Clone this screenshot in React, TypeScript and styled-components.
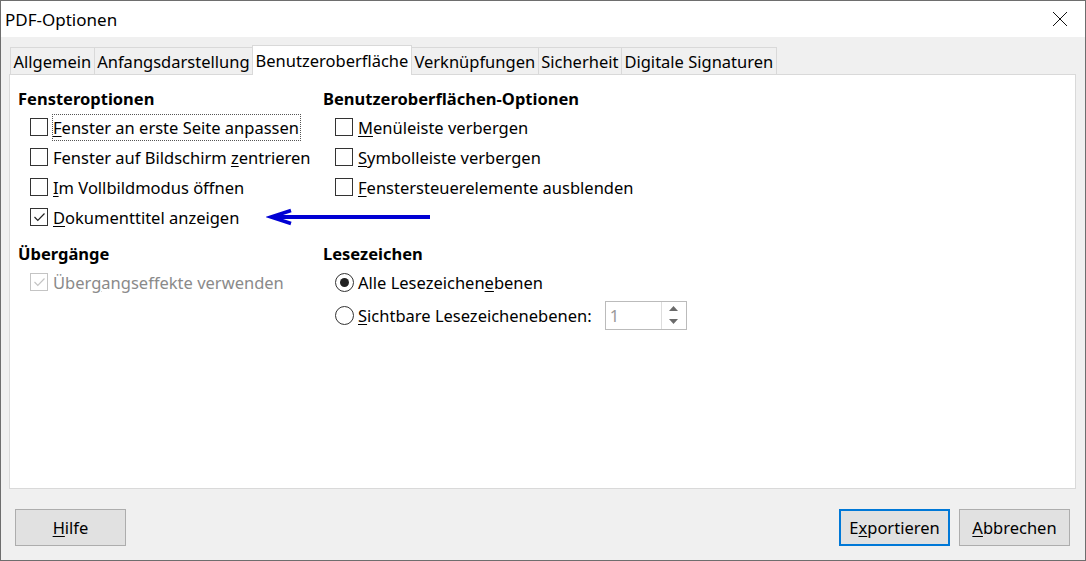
import styled, { createGlobalStyle } from 'styled-components'

const Global = createGlobalStyle`
  html, body { margin: 0; padding: 0; background: #fff; }
  body { font-family: "Noto Sans", "Open Sans", sans-serif; font-size: 16.5px; color: #000; }
`

const Window = styled.div`
  width: 1086px;
  height: 561px;
  box-sizing: border-box;
  border: 1px solid #6e6e6e;
  display: flex;
  flex-direction: column;
  background: #f0f0f0;
`

const TitleBar = styled.div`
  height: 36px;
  background: #fff;
  display: flex;
  align-items: center;
  justify-content: space-between;
  padding: 0 0 0 4px;
  font-size: 17px;
`

const CloseBtn = styled.div`
  width: 46px;
  height: 36px;
  display: flex;
  align-items: center;
  justify-content: center;
  margin-right: 2px;
`

const Body = styled.div`
  flex: 1;
  display: flex;
  flex-direction: column;
  padding: 8px 9px 0 8px;
`

const Tabs = styled.div`
  display: flex;
  align-items: flex-end;
  height: 29px;
  padding-left: 2px;
`

const Tab = styled.div<{ $active?: boolean }>`
  height: ${p => (p.$active ? 30 : 27)}px;
  box-sizing: border-box;
  padding: 0 2.5px;
  display: flex;
  align-items: center;
  background: ${p => (p.$active ? '#fff' : '#f0f0f0')};
  border: 1px solid #d9d9d9;
  border-bottom: none;
  margin-left: -1px;
  margin-bottom: ${p => (p.$active ? -1 : 0)}px;
  position: relative;
  z-index: ${p => (p.$active ? 1 : 0)};
  font-size: 16.5px;
`

const Panel = styled.div`
  height: 415px;
  box-sizing: border-box;
  background: #fff;
  border: 1px solid #d9d9d9;
  padding: 11px 0 0 8px;
  display: grid;
  grid-template-columns: 305px 1fr;
  align-content: start;
  row-gap: 9px;
`

const Section = styled.div`
  display: flex;
  flex-direction: column;
`

const Heading = styled.div`
  font-weight: bold;
  height: 26px;
  line-height: 26px;
  font-size: 16.5px;
`

const Row = styled.div<{ $tall?: boolean }>`
  height: ${p => (p.$tall ? 36 : 30)}px;
  display: flex;
  align-items: center;
  padding-left: 12px;
  position: relative;
`

const Box = styled.span<{ $disabled?: boolean }>`
  width: 18px;
  height: 18px;
  box-sizing: border-box;
  border: 1px solid ${p => (p.$disabled ? '#c4c4c4' : '#333')};
  background: #fff;
  display: inline-flex;
  align-items: center;
  justify-content: center;
  margin-right: 5px;
  flex: none;
`

const Radio = styled.span`
  width: 19px;
  height: 19px;
  box-sizing: border-box;
  border: 1px solid #333;
  border-radius: 50%;
  display: inline-flex;
  align-items: center;
  justify-content: center;
  margin-right: 4px;
  flex: none;
`

const Dot = styled.span`
  width: 9px;
  height: 9px;
  border-radius: 50%;
  background: #222;
`

const Label = styled.span<{ $disabled?: boolean; $focus?: boolean }>`
  color: ${p => (p.$disabled ? '#8a8a8a' : '#000')};
  font-size: 16.5px;
  outline: ${p => (p.$focus ? '1px dotted #555' : 'none')};
  outline-offset: 0;
  padding: 1px 1px 1px 0;
  white-space: nowrap;
`

const U = styled.span`
  text-decoration: underline;
  text-underline-offset: 2px;
`

const Spin = styled.div`
  margin-left: 12px;
  width: 82px;
  height: 29px;
  box-sizing: border-box;
  border: 1px solid #bbb;
  display: flex;
  align-items: center;
  justify-content: space-between;
  color: #9a9a9a;
  padding-left: 4px;
`

const SpinArrows = styled.div`
  width: 24px;
  height: 100%;
  display: flex;
  flex-direction: column;
  border-left: 1px solid #ddd;
`

const SpinArrow = styled.div`
  flex: 1;
  display: flex;
  align-items: center;
  justify-content: center;
`

const Arrow = styled.svg`
  position: absolute;
  left: 248px;
  top: 6px;
`

const Footer = styled.div`
  flex: 1;
  display: flex;
  align-items: center;
  justify-content: space-between;
  padding: 5px 6px 0 6px;
`

const Buttons = styled.div`
  display: flex;
  gap: 9px;
`

const Button = styled.div<{ $default?: boolean }>`
  width: 111px;
  height: 37px;
  box-sizing: border-box;
  background: #e1e1e1;
  border: ${p => (p.$default ? '2px solid #0078d7' : '1px solid #adadad')};
  display: flex;
  align-items: center;
  justify-content: center;
  font-size: 16.5px;
`

function Check({ checked, disabled }: { checked?: boolean; disabled?: boolean }) {
  return (
    <Box $disabled={disabled}>
      {checked && (
        <svg width="13" height="10" viewBox="0 0 13 10">
          <path d="M1.5 5 L4.8 8.3 L11.5 1.5" fill="none" stroke={disabled ? '#c4c4c4' : '#222'} strokeWidth="1.2" />
        </svg>
      )}
    </Box>
  )
}

export default function App() {
  return (
    <>
      <Global />
      <Window>
        <TitleBar>
          <span>PDF-Optionen</span>
          <CloseBtn>
            <svg width="16" height="16" viewBox="0 0 16 16">
              <path d="M1 1 L15 15 M15 1 L1 15" stroke="#111" strokeWidth="1" />
            </svg>
          </CloseBtn>
        </TitleBar>
        <Body>
          <Tabs>
            <Tab>Allgemein</Tab>
            <Tab>Anfangsdarstellung</Tab>
            <Tab $active>Benutzeroberfläche</Tab>
            <Tab>Verknüpfungen</Tab>
            <Tab>Sicherheit</Tab>
            <Tab>Digitale Signaturen</Tab>
          </Tabs>
          <Panel>
            <Section>
              <Heading>Fensteroptionen</Heading>
              <Row>
                <Check />
                <Label $focus><U>F</U>enster an erste Seite anpassen</Label>
              </Row>
              <Row>
                <Check />
                <Label>Fenster auf Bildschirm <U>z</U>entrieren</Label>
              </Row>
              <Row>
                <Check />
                <Label><U>I</U>m Vollbildmodus öffnen</Label>
              </Row>
              <Row>
                <Check checked />
                <Label><U>D</U>okumenttitel anzeigen</Label>
                <Arrow width="166" height="18" viewBox="0 0 166 18">
                  <path d="M164 9 L6 9" stroke="#0000d4" strokeWidth="4" />
                  <path d="M25 2.5 L5 9 L25 15.5" fill="none" stroke="#0000d4" strokeWidth="3.5" strokeLinejoin="miter" />
                </Arrow>
              </Row>
            </Section>
            <Section>
              <Heading>Benutzeroberflächen-Optionen</Heading>
              <Row>
                <Check />
                <Label><U>M</U>enüleiste verbergen</Label>
              </Row>
              <Row>
                <Check />
                <Label><U>S</U>ymbolleiste verbergen</Label>
              </Row>
              <Row>
                <Check />
                <Label><U>F</U>enstersteuerelemente ausblenden</Label>
              </Row>
            </Section>
            <Section>
              <Heading>Übergänge</Heading>
              <Row>
                <Check checked disabled />
                <Label $disabled>Über<U>g</U>angseffekte verwenden</Label>
              </Row>
            </Section>
            <Section>
              <Heading>Lesezeichen</Heading>
              <Row>
                <Radio><Dot /></Radio>
                <Label>Alle Lesezeichen<U>e</U>benen</Label>
              </Row>
              <Row $tall>
                <Radio />
                <Label><U>S</U>ichtbare Lesezeichenebenen:</Label>
                <Spin>
                  <span>1</span>
                  <SpinArrows>
                    <SpinArrow>
                      <svg width="9" height="5" viewBox="0 0 9 5"><path d="M0 5 L4.5 0 L9 5 Z" fill="#6a6a6a" /></svg>
                    </SpinArrow>
                    <SpinArrow>
                      <svg width="9" height="5" viewBox="0 0 9 5"><path d="M0 0 L4.5 5 L9 0 Z" fill="#6a6a6a" /></svg>
                    </SpinArrow>
                  </SpinArrows>
                </Spin>
              </Row>
            </Section>
          </Panel>
          <Footer>
            <Button><U>H</U>ilfe</Button>
            <Buttons>
              <Button $default>E<U>x</U>portieren</Button>
              <Button><U>A</U>bbrechen</Button>
            </Buttons>
          </Footer>
        </Body>
      </Window>
    </>
  )
}
